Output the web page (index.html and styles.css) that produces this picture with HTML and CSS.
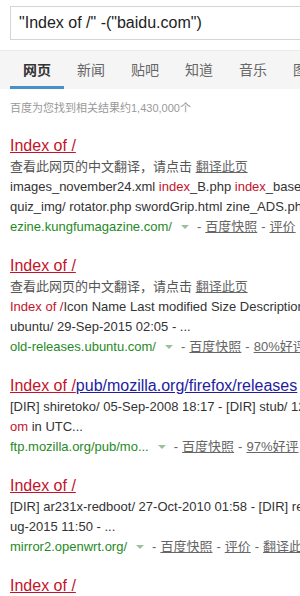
FILE: index.html
```html
<!DOCTYPE html>
<html lang="zh-CN">
<head>
  <meta charset="UTF-8">
  <meta name="viewport" content="width=device-width, initial-scale=1.0">
  <title>Index of / - 百度搜索</title>
  <link rel="stylesheet" href="styles.css">
</head>
<body>
  <div class="page">
    <div class="search-box">"Index of /" -("baidu.com")</div>

    <div class="tabs">
      <span class="tab tab--active">网页</span>
      <span class="tab">新闻</span>
      <span class="tab">贴吧</span>
      <span class="tab">知道</span>
      <span class="tab">音乐</span>
      <span class="tab">图片</span>
      <span class="tab">视频</span>
    </div>

    <div class="count">百度为您找到相关结果约1,430,000个</div>

    <div class="results">
      <div class="result">
        <div class="title"><span class="title-hl">Index of /</span></div>
        <div class="line line--gray">查看此网页的中文翻译，请点击 <span class="link">翻译此页</span></div>
        <div class="line">images_november24.xml <em>index</em>_B.php <em>index</em>_base.php</div>
        <div class="line">quiz_img/ rotator.php swordGrip.html zine_ADS.php</div>
        <div class="line"><span class="url">ezine.kungfumagazine.com/</span><span class="arrow"></span><span class="sep">-</span><span class="link">百度快照</span><span class="sep">-</span><span class="link">评价</span></div>
      </div>

      <div class="result">
        <div class="title"><span class="title-hl">Index of /</span></div>
        <div class="line line--gray">查看此网页的中文翻译，请点击 <span class="link">翻译此页</span></div>
        <div class="line"><em>Index of /</em>Icon Name Last modified Size Description</div>
        <div class="line">ubuntu/ 29-Sep-2015 02:05 - ...</div>
        <div class="line"><span class="url">old-releases.ubuntu.com/</span><span class="arrow"></span><span class="sep">-</span><span class="link">百度快照</span><span class="sep">-</span><span class="link">80%好评</span></div>
      </div>

      <div class="result">
        <div class="title"><span class="title-hl">Index of /</span><span class="title-rest">pub/mozilla.org/firefox/releases</span></div>
        <div class="line">[DIR] shiretoko/ 05-Sep-2008 18:17 - [DIR] stub/ 12-Oct-2015</div>
        <div class="line"><em>om</em> in UTC...</div>
        <div class="line"><span class="url">ftp.mozilla.org/pub/mo...</span><span class="arrow"></span><span class="sep">-</span><span class="link">百度快照</span><span class="sep">-</span><span class="link">97%好评</span></div>
      </div>

      <div class="result">
        <div class="title"><span class="title-hl">Index of /</span></div>
        <div class="line">[DIR] ar231x-redboot/ 27-Oct-2010 01:58 - [DIR] realtek/ 14-A</div>
        <div class="line">ug-2015 11:50 - ...</div>
        <div class="line"><span class="url">mirror2.openwrt.org/</span><span class="arrow"></span><span class="sep">-</span><span class="link">百度快照</span><span class="sep">-</span><span class="link">评价</span><span class="sep">-</span><span class="link">翻译此页</span></div>
      </div>

      <div class="result">
        <div class="title"><span class="title-hl">Index of /</span></div>
      </div>
    </div>
  </div>
</body>
</html>
```

FILE: styles.css
```css
body {
  margin: 0;
  padding: 0;
  background: #fff;
  font-family: "Liberation Sans", Arial, "Noto Sans CJK SC", sans-serif;
  color: #333;
  overflow: hidden;
}

.page {
  width: 640px;
  white-space: nowrap;
}

.search-box {
  margin: 6px 0 0 10px;
  height: 32px;
  width: 500px;
  border: 1px solid #d4d4d4;
  padding-left: 8px;
  font-size: 16px;
  line-height: 32px;
  color: #222;
}

.tabs {
  display: flex;
  margin-top: 10px;
  padding-left: 10px;
  height: 38px;
  background: #f5f5f5;
  border-top: 1px solid #ebebeb;
}

.tab {
  width: 54px;
  text-align: center;
  font-size: 14px;
  line-height: 38px;
  color: #666;
  box-sizing: border-box;
}

.tab--active {
  color: #333;
  font-weight: bold;
  border-bottom: 3px solid #4a8fc5;
  line-height: 38px;
  height: 38px;
}

.count {
  padding: 9px 10px 0;
  font-size: 11px;
  line-height: 20px;
  color: #999;
}

.results {
  padding: 16px 10px 0;
}

.result {
  margin-bottom: 17px;
}

.title {
  font-size: 16px;
  line-height: 23px;
}

.title-hl {
  color: #c4122a;
  text-decoration: underline;
}

.title-rest {
  color: #241b9f;
  text-decoration: underline;
}

.line {
  font-size: 13px;
  line-height: 20px;
  color: #333;
}

.line--gray {
  color: #555;
}

.line em {
  font-style: normal;
  color: #c4122a;
}

.link {
  color: #666;
  text-decoration: underline;
}

.url {
  color: #1f8a1f;
}

.arrow {
  display: inline-block;
  width: 0;
  height: 0;
  margin: 0 8px 2px 9px;
  border-left: 4px solid transparent;
  border-right: 4px solid transparent;
  border-top: 4px solid #9cc09c;
  vertical-align: middle;
}

.sep {
  color: #666;
  margin-right: 4px;
}

.link + .sep {
  margin-left: 4px;
}
```
